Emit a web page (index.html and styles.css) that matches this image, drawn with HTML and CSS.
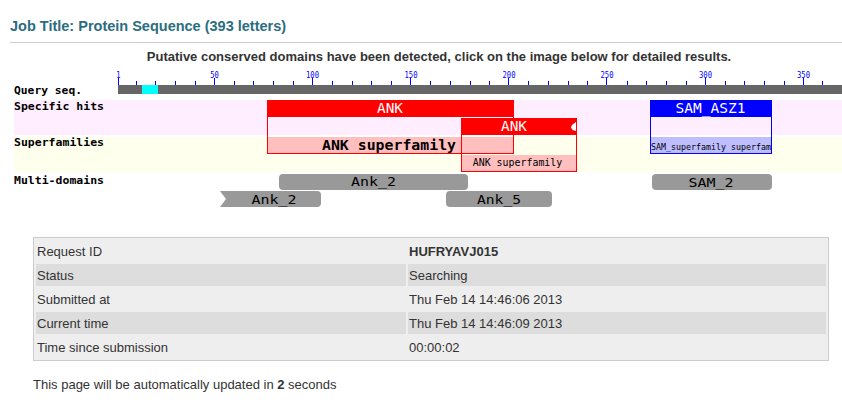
FILE: index.html
```html
<!DOCTYPE html>
<html>
<head>
<meta charset="utf-8">
<title>Job Title: Protein Sequence</title>
<link rel="stylesheet" href="styles.css">
</head>
<body>
<h2 class="job-title">Job Title: Protein Sequence (393 letters)</h2>
<p class="intro">Putative conserved domains have been detected, click on the image below for detailed results.</p>
<svg class="domains" width="828" height="147" viewBox="14 65 828 147" xmlns="http://www.w3.org/2000/svg">
  <!-- bands -->
  <rect x="14" y="100" width="828" height="35" fill="#ffeeff"/>
  <rect x="14" y="137" width="828" height="35" fill="#ffffee"/>

  <!-- labels -->
  <g class="lbl">
    <text x="14" y="94" textLength="68" lengthAdjust="spacingAndGlyphs">Query seq.</text>
    <text x="14" y="109.5" textLength="90" lengthAdjust="spacingAndGlyphs">Specific hits</text>
    <text x="14" y="146" textLength="90" lengthAdjust="spacingAndGlyphs">Superfamilies</text>
    <text x="14" y="183.5" textLength="90" lengthAdjust="spacingAndGlyphs">Multi-domains</text>
  </g>

  <!-- ruler numbers -->
  <g class="num">
    <text x="118.5" y="77.5" textLength="4.3" lengthAdjust="spacingAndGlyphs">1</text>
    <text x="214.5" y="77.5" textLength="8.6" lengthAdjust="spacingAndGlyphs">50</text>
    <text x="312.5" y="77.5" textLength="13" lengthAdjust="spacingAndGlyphs">100</text>
    <text x="411" y="77.5" textLength="13" lengthAdjust="spacingAndGlyphs">150</text>
    <text x="509" y="77.5" textLength="13" lengthAdjust="spacingAndGlyphs">200</text>
    <text x="607" y="77.5" textLength="13" lengthAdjust="spacingAndGlyphs">250</text>
    <text x="705.5" y="77.5" textLength="13" lengthAdjust="spacingAndGlyphs">300</text>
    <text x="803.5" y="77.5" textLength="13" lengthAdjust="spacingAndGlyphs">350</text>
  </g>

  <!-- ticks -->
  <g fill="#0000ff">
    <rect x="118" y="78" width="1" height="7"/>
    <rect x="214" y="78" width="1" height="7"/>
    <rect x="312" y="78" width="1" height="7"/>
    <rect x="410" y="78" width="1" height="7"/>
    <rect x="508" y="78" width="1" height="7"/>
    <rect x="606" y="78" width="1" height="7"/>
    <rect x="705" y="78" width="1" height="7"/>
    <rect x="803" y="78" width="1" height="7"/>
    <rect x="136" y="81" width="1" height="4"/>
    <rect x="155" y="81" width="1" height="4"/>
    <rect x="175" y="81" width="1" height="4"/>
    <rect x="195" y="81" width="1" height="4"/>
    <rect x="234" y="81" width="1" height="4"/>
    <rect x="253" y="81" width="1" height="4"/>
    <rect x="273" y="81" width="1" height="4"/>
    <rect x="293" y="81" width="1" height="4"/>
    <rect x="332" y="81" width="1" height="4"/>
    <rect x="352" y="81" width="1" height="4"/>
    <rect x="371" y="81" width="1" height="4"/>
    <rect x="391" y="81" width="1" height="4"/>
    <rect x="430" y="81" width="1" height="4"/>
    <rect x="450" y="81" width="1" height="4"/>
    <rect x="470" y="81" width="1" height="4"/>
    <rect x="489" y="81" width="1" height="4"/>
    <rect x="528" y="81" width="1" height="4"/>
    <rect x="548" y="81" width="1" height="4"/>
    <rect x="568" y="81" width="1" height="4"/>
    <rect x="587" y="81" width="1" height="4"/>
    <rect x="627" y="81" width="1" height="4"/>
    <rect x="646" y="81" width="1" height="4"/>
    <rect x="666" y="81" width="1" height="4"/>
    <rect x="686" y="81" width="1" height="4"/>
    <rect x="725" y="81" width="1" height="4"/>
    <rect x="744" y="81" width="1" height="4"/>
    <rect x="764" y="81" width="1" height="4"/>
    <rect x="784" y="81" width="1" height="4"/>
    <rect x="822" y="81" width="1" height="4"/>
  </g>

  <!-- query bar -->
  <rect x="118" y="85" width="724" height="9" fill="#666666"/>
  <rect x="142" y="85" width="16" height="9" fill="#00ffff"/>

  <!-- ANK (1) -->
  <rect x="267" y="100" width="247" height="17" fill="#ff0000"/>
  <rect x="267" y="137" width="247" height="17" fill="#ffbfbf"/>
  <rect x="267.5" y="100.5" width="246" height="53" fill="none" stroke="#ff0000"/>
  <text class="hdr" x="390" y="112.5" textLength="26" lengthAdjust="spacingAndGlyphs">ANK</text>
  <text class="sf-big" x="389" y="149.5" textLength="134" lengthAdjust="spacingAndGlyphs">ANK superfamily</text>

  <!-- ANK (2) -->
  <rect x="461" y="118" width="116" height="17" fill="#ff0000"/>
  <rect x="461" y="155" width="116" height="17" fill="#ffbfbf"/>
  <rect x="461.5" y="118.5" width="115" height="53" fill="none" stroke="#ff0000"/>
  <path d="M576,122 L572,125 L571,127.5 L572.5,130 L576,131 Z" fill="#ffffff"/>
  <text class="hdr" x="514" y="130.5" textLength="26" lengthAdjust="spacingAndGlyphs">ANK</text>
  <text class="sf-small" x="517.5" y="166" textLength="89.5" lengthAdjust="spacingAndGlyphs">ANK superfamily</text>

  <!-- SAM_ASZ1 -->
  <rect x="650" y="100" width="122" height="17" fill="#0000ff"/>
  <rect x="650" y="137" width="122" height="17" fill="#bdbdff"/>
  <rect x="650.5" y="100.5" width="121" height="53" fill="none" stroke="#0000ff"/>
  <text class="hdr" x="710.5" y="112.5" textLength="70" lengthAdjust="spacingAndGlyphs">SAM_ASZ1</text>
  <text class="sf-tiny" x="651" y="149.5" textLength="120" lengthAdjust="spacingAndGlyphs">SAM_superfamily superfam</text>

  <!-- multi-domains -->
  <g fill="#999999">
    <rect x="279" y="174" width="189" height="16" rx="4"/>
    <path d="M220,191 H317 Q321,191 321,195 V203 Q321,207 317,207 H220 L226,199 Z"/>
    <rect x="446" y="191" width="106" height="16" rx="4"/>
    <rect x="652" y="174" width="120" height="16" rx="4"/>
  </g>
  <g class="md">
    <text x="373.5" y="186" textLength="45" lengthAdjust="spacingAndGlyphs">Ank_2</text>
    <text x="274" y="203.5" textLength="45" lengthAdjust="spacingAndGlyphs">Ank_2</text>
    <text x="499" y="203.5" textLength="44" lengthAdjust="spacingAndGlyphs">Ank_5</text>
    <text x="711" y="186.5" textLength="45" lengthAdjust="spacingAndGlyphs">SAM_2</text>
  </g>
</svg>

<table class="info">
  <tr><td class="key">Request ID</td><td class="val strong">HUFRYAVJ015</td></tr>
  <tr class="alt"><td class="key">Status</td><td class="val">Searching</td></tr>
  <tr><td class="key">Submitted at</td><td class="val">Thu Feb 14 14:46:06 2013</td></tr>
  <tr class="alt"><td class="key">Current time</td><td class="val">Thu Feb 14 14:46:09 2013</td></tr>
  <tr><td class="key">Time since submission</td><td class="val">00:00:02</td></tr>
</table>

<p class="refresh">This page will be automatically updated in <b>2</b> seconds</p>
</body>
</html>
```

FILE: styles.css
```css
html, body {
  margin: 0;
  padding: 0;
  background: #ffffff;
}

body {
  font-family: "Liberation Sans", Arial, sans-serif;
  color: #333333;
  overflow: hidden;
}

.job-title {
  margin: 16px 0 0 10px;
  padding: 0 0 6px 0;
  font-size: 14.5px;
  line-height: 20px;
  font-weight: bold;
  color: #2b6d80;
  border-bottom: 1px solid #cccccc;
}

.intro {
  margin: 6px 0 0 0;
  padding-left: 36px;
  font-size: 13px;
  line-height: 16px;
  font-weight: bold;
  text-align: center;
  color: #333333;
}

.domains {
  display: block;
  margin-left: 14px;
}

.domains text {
  font-family: "DejaVu Sans Mono", monospace;
}

.lbl text {
  font-size: 10.5px;
  font-weight: bold;
  fill: #000000;
}

.num text {
  font-size: 9.5px;
  fill: #0000ff;
  text-anchor: middle;
}

.domains .hdr {
  font-size: 14px;
  fill: #ffffff;
  text-anchor: middle;
}

.domains .sf-big {
  font-size: 14px;
  font-weight: bold;
  fill: #000000;
  text-anchor: middle;
}

.domains .sf-small {
  font-size: 10px;
  fill: #000000;
  text-anchor: middle;
}

.domains .sf-tiny {
  font-size: 9px;
  fill: #000000;
}

.md text {
  font-size: 12px;
  fill: #000000;
  text-anchor: middle;
}

.info {
  margin: 25px 0 0 33px;
  width: 796px;
  border: 1px solid #cccccc;
  background: #eeeeee;
  border-spacing: 2px;
  font-size: 13px;
  color: #333333;
}

.info td {
  height: 21px;
  padding: 1px 1px 0;
  line-height: 16px;
  vertical-align: middle;
}

.info .key {
  width: 368px;
}

.info .alt td {
  background: #dddddd;
}

.info .strong {
  font-weight: bold;
}

.refresh {
  margin: 16px 0 0 33px;
  font-size: 13px;
  line-height: 16px;
  color: #333333;
}
```
